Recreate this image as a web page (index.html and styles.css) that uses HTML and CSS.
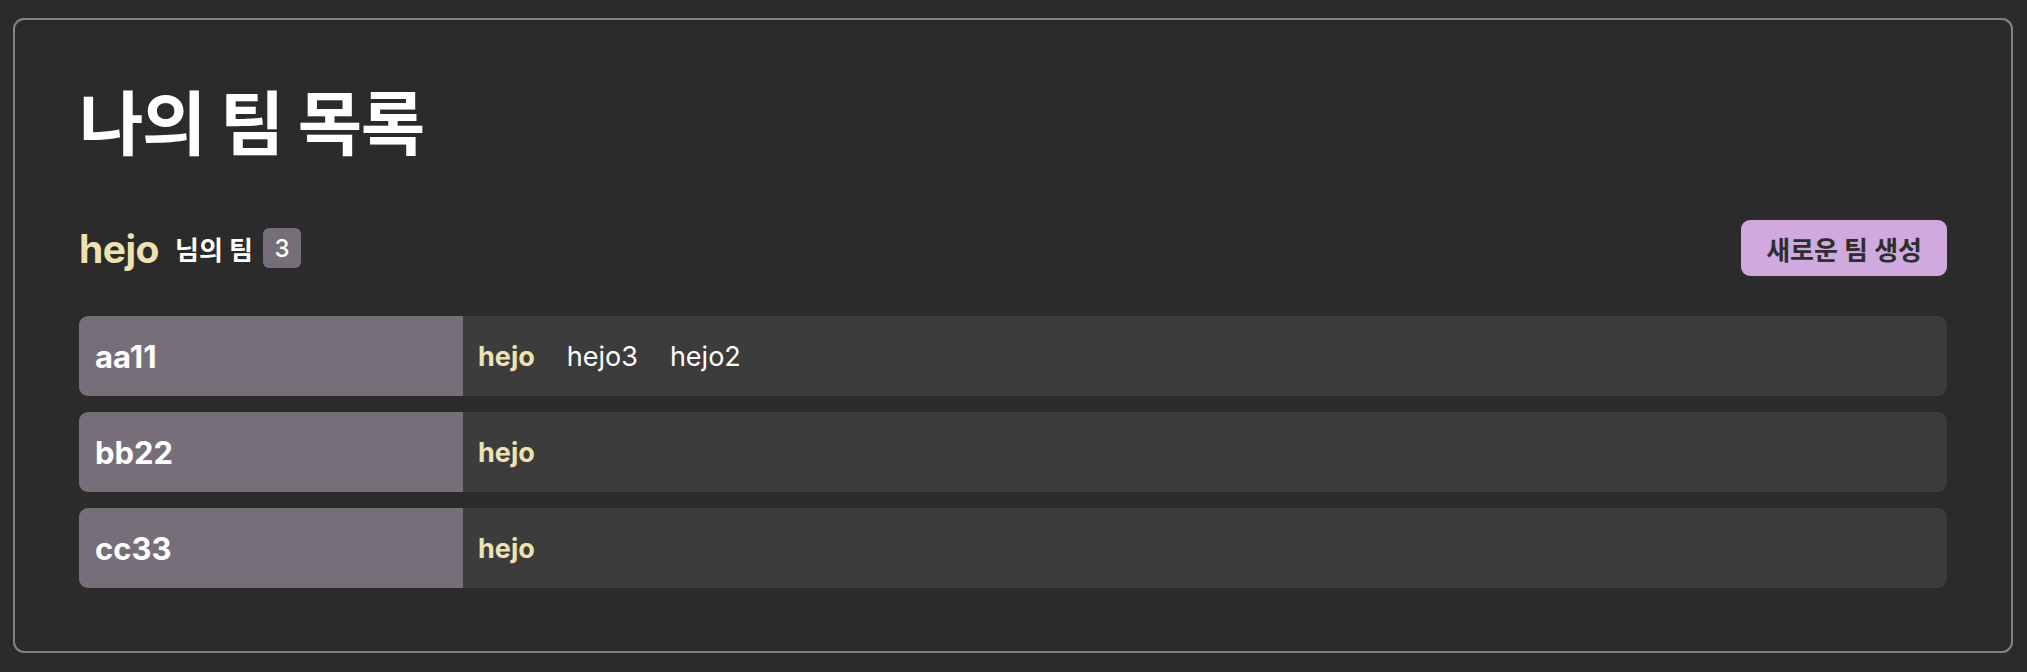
FILE: index.html
```html
<!DOCTYPE html>
<html lang="ko">
<head>
<meta charset="utf-8">
<title>나의 팀 목록</title>
<link rel="stylesheet" href="styles.css">
</head>
<body>
<main class="panel">
  <h1 class="title">나의 팀 목록</h1>
  <div class="team-head">
    <div class="owner">
      <span class="owner-name">hejo</span>
      <span class="owner-label">님의 팀</span>
      <span class="count">3</span>
    </div>
    <button class="create-btn" type="button">새로운 팀 생성</button>
  </div>
  <ul class="team-list">
    <li class="team">
      <div class="team-name">aa11</div>
      <div class="members">
        <span class="member me">hejo</span>
        <span class="member">hejo3</span>
        <span class="member">hejo2</span>
      </div>
    </li>
    <li class="team">
      <div class="team-name">bb22</div>
      <div class="members">
        <span class="member me">hejo</span>
      </div>
    </li>
    <li class="team">
      <div class="team-name">cc33</div>
      <div class="members">
        <span class="member me">hejo</span>
      </div>
    </li>
  </ul>
</main>
</body>
</html>
```
FILE: styles.css
```css
* { box-sizing: border-box; }

html, body {
  margin: 0;
  padding: 0;
  background: #2b2b2b;
}

body {
  font-family: Inter, "Noto Sans CJK KR", sans-serif;
  color: #ffffff;
  padding: 18px 14px 18px 13px;
}

.panel {
  border: 2px solid #838383;
  border-radius: 11px;
  padding: 65px 64px 63px 64px;
}

.title {
  margin: 0 0 55px 0;
  font-size: 70px;
  line-height: 80px;
  font-weight: 700;
  letter-spacing: -1.5px;
  color: #ffffff;
}

.team-head {
  display: flex;
  align-items: center;
  justify-content: space-between;
  height: 56px;
  margin-bottom: 40px;
}

.owner {
  display: flex;
  align-items: center;
}

.owner-name {
  font-size: 39px;
  font-weight: 700;
  color: #efe2b2;
  letter-spacing: -0.5px;
}

.owner-label {
  margin-left: 16px;
  font-size: 26px;
  font-weight: 700;
  color: #ffffff;
}

.count {
  margin-left: 10px;
  width: 38px;
  height: 40px;
  display: flex;
  align-items: center;
  justify-content: center;
  background: #766f7a;
  border-radius: 6px;
  font-size: 24px;
  font-weight: 500;
  color: #ffffff;
}

.create-btn {
  height: 56px;
  padding: 0 25px;
  border: none;
  border-radius: 9px;
  background: #d0aadf;
  color: #2e2e2e;
  font-family: Inter, "Noto Sans CJK KR", sans-serif;
  font-size: 26px;
  font-weight: 700;
}

.team-list {
  list-style: none;
  margin: 0;
  padding: 0;
  display: flex;
  flex-direction: column;
  gap: 16px;
}

.team {
  display: flex;
  height: 80px;
  border-radius: 9px;
  overflow: hidden;
  background: #3c3c3c;
}

.team-name {
  width: 384px;
  flex: none;
  display: flex;
  align-items: center;
  padding: 0 16px;
  background: #766f7a;
  font-size: 31px;
  font-weight: 700;
  color: #ffffff;
}

.members {
  flex: 1;
  display: flex;
  align-items: center;
  gap: 32px;
  padding: 0 15px;
}

.member {
  font-size: 27px;
  font-weight: 400;
  color: #ffffff;
}

.member.me {
  font-weight: 700;
  color: #efe2b2;
}
```
